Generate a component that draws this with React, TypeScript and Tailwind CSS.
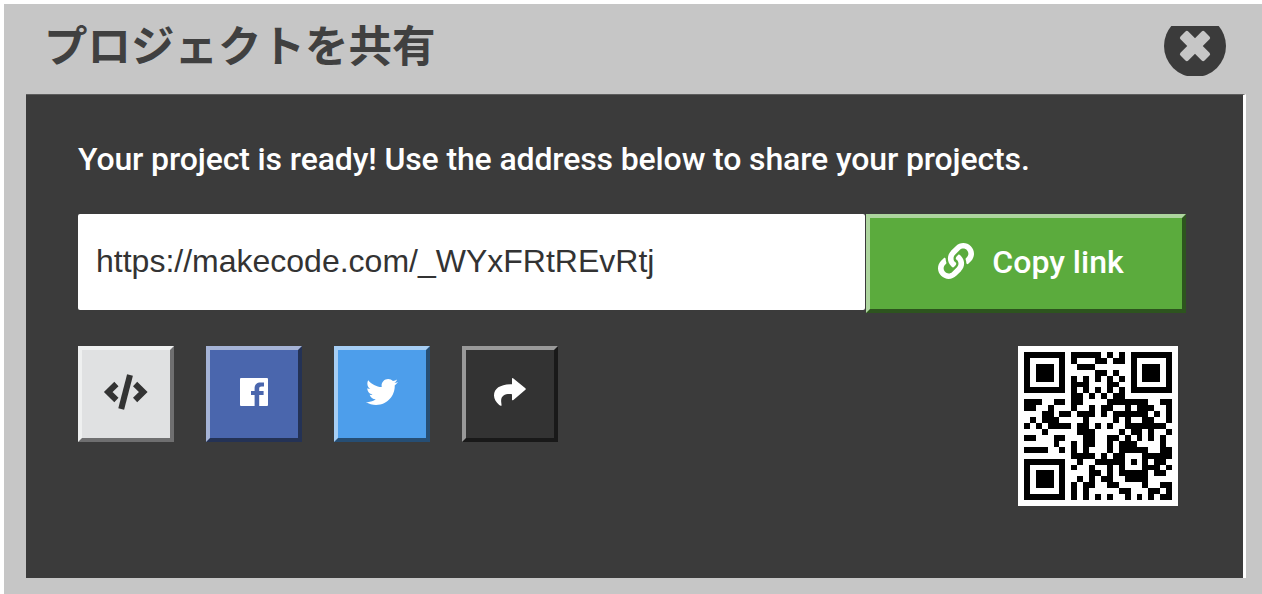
import { useMemo } from "react";
import { FaLink, FaTwitter } from "react-icons/fa";

const SHARE_HOST = "https://makecode.com/";
const SHARE_ID = "_WYxFRtREvRtj";

const ALNUM = "0123456789ABCDEFGHIJKLMNOPQRSTUVWXYZ $%*+-./:";

// Version 2, error correction L
const SIZE = 25;
const DATA_CODEWORDS = 34;
const EC_CODEWORDS = 10;
// EC level L with mask 1 (every even row is inverted)
const FORMAT_BITS = "111001011110011";

const gfMul = (a: number, b: number) => {
  let r = 0;
  for (let i = 7; i >= 0; i--) {
    r = (r << 1) ^ ((r >>> 7) * 0x11d);
    r ^= ((b >>> i) & 1) * a;
  }
  return r;
};

const errorCorrection = (data: number[]) => {
  const gen: number[] = new Array(EC_CODEWORDS).fill(0);
  gen[EC_CODEWORDS - 1] = 1;
  let root = 1;
  for (let i = 0; i < EC_CODEWORDS; i++) {
    for (let j = 0; j < EC_CODEWORDS; j++) {
      gen[j] = gfMul(gen[j], root);
      if (j + 1 < EC_CODEWORDS) gen[j] ^= gen[j + 1];
    }
    root = gfMul(root, 2);
  }
  const rem: number[] = new Array(EC_CODEWORDS).fill(0);
  for (const b of data) {
    const factor = b ^ rem.shift()!;
    rem.push(0);
    gen.forEach((c, i) => (rem[i] ^= gfMul(c, factor)));
  }
  return rem;
};

// Host goes in as alphanumeric, the case sensitive id as bytes
const encodeData = (host: string, id: string) => {
  let bits = "";
  const put = (value: number, len: number) => {
    bits += value.toString(2).padStart(len, "0");
  };
  const upper = host.toUpperCase();
  put(2, 4);
  put(upper.length, 9);
  for (let i = 0; i < upper.length; i += 2) {
    const a = ALNUM.indexOf(upper[i]);
    if (i + 1 < upper.length) put(a * 45 + ALNUM.indexOf(upper[i + 1]), 11);
    else put(a, 6);
  }
  put(4, 4);
  put(id.length, 8);
  for (const ch of id) put(ch.charCodeAt(0), 8);
  put(0, 4);
  while (bits.length % 8) bits += "0";

  const data: number[] = [];
  for (let i = 0; i < bits.length; i += 8) data.push(parseInt(bits.slice(i, i + 8), 2));
  for (let pad = 0xec; data.length < DATA_CODEWORDS; pad ^= 0xec ^ 0x11) data.push(pad);
  return data;
};

const buildQr = (host: string, id: string) => {
  const grid: (boolean | null)[][] = Array.from({ length: SIZE }, () => new Array(SIZE).fill(null));

  // Timing
  for (let i = 0; i < SIZE; i++) {
    grid[6][i] = i % 2 === 0;
    grid[i][6] = i % 2 === 0;
  }

  // Finders
  for (const [cx, cy] of [[3, 3], [SIZE - 4, 3], [3, SIZE - 4]]) {
    for (let dy = -4; dy <= 4; dy++) {
      for (let dx = -4; dx <= 4; dx++) {
        const x = cx + dx;
        const y = cy + dy;
        if (x < 0 || y < 0 || x >= SIZE || y >= SIZE) continue;
        const d = Math.max(Math.abs(dx), Math.abs(dy));
        grid[y][x] = d !== 2 && d !== 4;
      }
    }
  }

  // Alignment
  for (let dy = -2; dy <= 2; dy++) {
    for (let dx = -2; dx <= 2; dx++) {
      grid[18 + dy][18 + dx] = Math.max(Math.abs(dx), Math.abs(dy)) !== 1;
    }
  }

  // Format
  const bit = (i: number) => FORMAT_BITS[14 - i] === "1";
  for (let i = 0; i <= 5; i++) grid[i][8] = bit(i);
  grid[7][8] = bit(6);
  grid[8][8] = bit(7);
  grid[8][7] = bit(8);
  for (let i = 9; i < 15; i++) grid[8][14 - i] = bit(i);
  for (let i = 0; i < 8; i++) grid[8][SIZE - 1 - i] = bit(i);
  for (let i = 8; i < 15; i++) grid[SIZE - 15 + i][8] = bit(i);
  grid[SIZE - 8][8] = true;

  // Zigzag data
  const data = encodeData(host, id);
  const all = [...data, ...errorCorrection(data)];
  let n = 0;
  for (let right = SIZE - 1; right >= 1; right -= 2) {
    if (right === 6) right = 5;
    const upward = ((right + 1) & 2) === 0;
    for (let v = 0; v < SIZE; v++) {
      const y = upward ? SIZE - 1 - v : v;
      for (const x of [right, right - 1]) {
        if (grid[y][x] !== null) continue;
        const value = n < all.length * 8 && ((all[n >> 3] >> (7 - (n & 7))) & 1) === 1;
        grid[y][x] = value !== (y % 2 === 0);
        n++;
      }
    }
  }
  return grid;
};

function QrCode({ host, id }: { host: string; id: string }) {
  const path = useMemo(
    () =>
      buildQr(host, id)
        .map((row, y) => row.map((on, x) => (on ? `M${x + 1} ${y + 1}h1v1h-1z` : "")).join(""))
        .join(""),
    [host, id]
  );

  return (
    <svg viewBox="0 0 27 27" className="mr-2 size-40 bg-white" shapeRendering="crispEdges">
      <path d={path} fill="#000" />
    </svg>
  );
}

const bevel = "border-4 border-t-white/50 border-l-white/50 border-r-black/50 border-b-black/50";
const iconButton = `flex size-24 items-center justify-center pb-1 ${bevel}`;

function CodeIcon() {
  return (
    <svg viewBox="0 0 46 36" className="h-9 w-[46px]" fill="none" stroke="#333">
      <path d="M13.4 10L5.2 18L13.4 26M32.1 10L40.3 18L32.1 26" strokeWidth="6" />
      <path d="M27 1L18.2 35" strokeWidth="6" />
    </svg>
  );
}

function FacebookIcon() {
  return (
    <svg viewBox="0 0 28 28" className="size-7">
      <rect width="28" height="28" rx="1" fill="#fff" />
      <path d="M14.6 28V17H11V13H14.6V10.2C14.6 6.5 17 4.6 20.5 4.6H24V8.4H21.5C19.9 8.4 19.2 9.2 19.2 10.6V13H23.6V17H19.2V28Z" fill="#4a66ad" />
    </svg>
  );
}

function ShareIcon() {
  return (
    <svg viewBox="0 0 32 28" className="h-7 w-8" fill="#fff">
      <path d="M18 0.6Q18.4 -0.4 19.4 0.5L31.4 10.2Q32.2 11 31.4 11.8L19.4 22Q18.4 22.8 18 21.7V16.2C12 15.5 6.5 17 7.2 24L7.6 27.4Q6.8 28.4 5.2 27C2 24 0 21 0 17.5C0 10 7 6.4 18 6.3Z" />
    </svg>
  );
}

export default function App() {
  return (
    <div className="h-[594px] w-[1262px] overflow-hidden bg-white pt-1 pl-1 font-['Roboto','Noto_Sans_CJK_JP',sans-serif]">
      <div className="flex h-full flex-col bg-[#c6c6c6] pr-4 pb-4 pl-[22px]">
        <header className="flex h-[90px] shrink-0 items-start justify-between pr-5 pl-[18px]">
          <h1 className="mt-2 font-['Noto_Sans_CJK_JP',sans-serif] text-[43.5px] leading-[64px] font-bold text-[#404040]">
            プロジェクトを共有
          </h1>
          <button aria-label="Close" className="mt-[22px]">
            <svg viewBox="0 0 62 50" className="h-[50px] w-[62px] overflow-hidden">
              <circle cx="31" cy="20" r="31" fill="#3b3b3b" />
              <g fill="#c6c6c6">
                <rect x="14" y="14.5" width="34" height="11" rx="2" transform="rotate(45 31 20)" />
                <rect x="14" y="14.5" width="34" height="11" rx="2" transform="rotate(-45 31 20)" />
              </g>
            </svg>
          </button>
        </header>

        <main className="h-[484px] w-[1220px] shrink-0 border-t border-r-[3px] border-t-[#5c5c5c] border-r-white bg-[#3b3b3b] px-[52px] pt-11">
          <p className="text-[32px] leading-10 font-medium tracking-[-0.13px] whitespace-nowrap text-white">
            Your project is ready! Use the address below to share your projects.
          </p>

          <div className="mt-[35px] flex w-[1108px] items-start">
            <input
              readOnly
              value={SHARE_HOST + SHARE_ID}
              className="mr-px h-24 min-w-0 flex-1 rounded-[2px] bg-white px-[18px] pb-px font-['Liberation_Sans',sans-serif] text-[32px] text-[#333] outline-none"
            />
            <button className={`flex h-[99px] w-80 items-center justify-center gap-[18px] bg-[#5bab3d] pb-[3px] pl-[10px] text-[32px] font-medium text-white ${bevel}`}>
              <FaLink className="mb-[3px] size-9" />
              Copy link
            </button>
          </div>

          <div className="mt-[33px] flex w-[1108px] items-start justify-between">
            <div className="flex gap-8">
              <button aria-label="Embed" className={`bg-[#e0e1e2] ${iconButton}`}>
                <CodeIcon />
              </button>
              <button aria-label="Facebook" className={`bg-[#4a66ad] ${iconButton}`}>
                <FacebookIcon />
              </button>
              <button aria-label="Twitter" className={`bg-[#4d9eeb] ${iconButton}`}>
                <FaTwitter className="size-8 text-white" />
              </button>
              <button aria-label="Share" className={`bg-[#333] ${iconButton}`}>
                <ShareIcon />
              </button>
            </div>
            <QrCode host={SHARE_HOST} id={SHARE_ID} />
          </div>
        </main>
      </div>
    </div>
  );
}
